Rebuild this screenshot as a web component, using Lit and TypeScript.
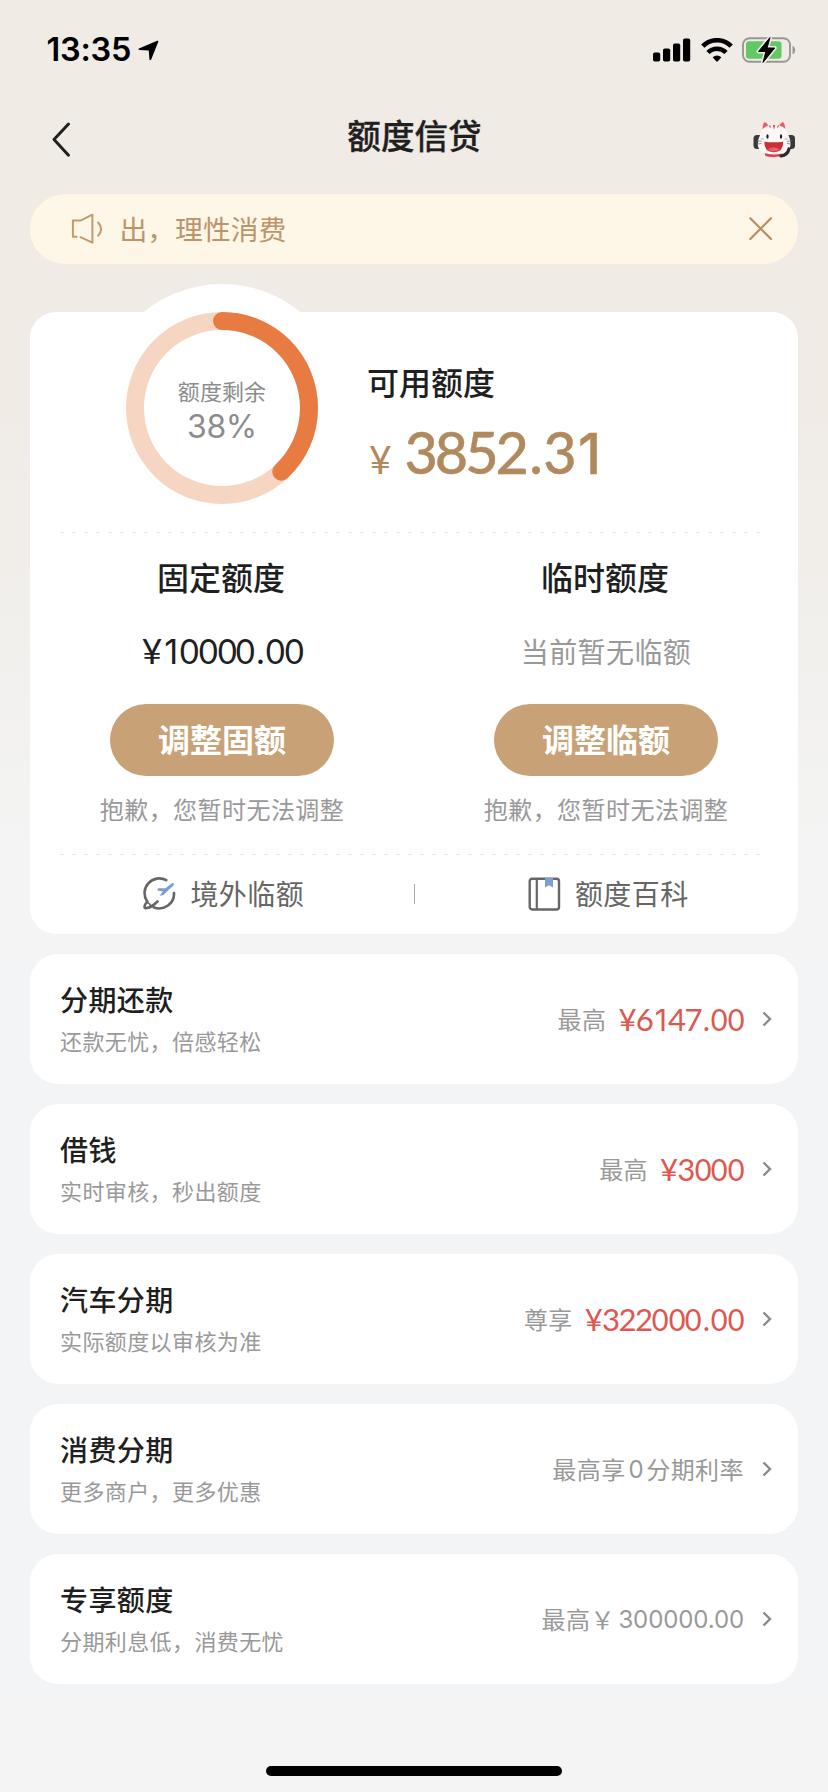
import { LitElement, html, css } from "lit";
import { customElement, property } from "lit/decorators.js";

const CJK = css`"Noto Sans CJK SC", sans-serif`;

/* Amount set in even figure boxes, with a wide decimal point. */
@customElement("money-text")
class MoneyText extends LitElement {
  @property() value = "";
  static styles = css`
    :host { display: inline-flex; align-items: baseline; font-family: Lato, sans-serif; }
    span { display: flex; justify-content: center; width: 0.528em; }
    .dot { width: 0.3em; }
    .yen { width: 0.58em; justify-content: flex-start; }
    .one { font-family: Inter, sans-serif; font-size: 0.97em; width: 0.52em; }
    .zero { transform: scaleX(0.93); }
  `;
  render() {
    const kinds: Record<string, string> = { ".": "dot", "¥": "yen", "1": "one", "0": "zero" };
    return [...this.value].map((c) => html`<span class=${kinds[c] ?? "fig"}>${c}</span>`);
  }
}

@customElement("status-bar")
class StatusBar extends LitElement {
  static styles = css`
    :host { display: block; }
    .bar { display: flex; align-items: center; justify-content: space-between; height: 100px; padding: 0 32px 0 46.5px; box-sizing: border-box; }
    .time { display: flex; align-items: center; gap: 7px; font: 600 32.5px/1 Inter, sans-serif; letter-spacing: -0.25px; color: #000; }
    .icons { display: flex; align-items: center; }
    svg { display: block; }
    .wifi { margin-left: 10px; }
    .battery { margin-left: 9px; }
  `;
  render() {
    return html`<div class="bar">
      <div class="time">
        <span>13:35</span>
        <svg width="21" height="21" viewBox="0 0 21 21"><path d="M1 8.6 19.2.8Q20.6.5 20.3 1.8L13.2 19.6Q12 21 11.4 19.3L10.8 10.6 1.6 9.9Q-.2 9.4 1 8.6Z" /></svg>
      </div>
      <div class="icons">
        <svg width="38" height="24" viewBox="0 0 38 24">
          <rect x="0" y="14.5" width="7.2" height="9" rx="1.8" /><rect x="10" y="10.5" width="7.2" height="13" rx="1.8" />
          <rect x="20" y="5.5" width="7.2" height="18" rx="1.8" /><rect x="30" y="0.5" width="7.2" height="23" rx="1.8" />
        </svg>
        <svg class="wifi" width="32" height="24" viewBox="0 0 32 24">
          <g fill="none" stroke="#000" stroke-width="4.6">
            <path d="M1.8 8.2C9.6.2 22.4.2 30.2 8.2" /><path d="M7 14.5C12 9.4 20 9.4 25 14.5" />
          </g>
          <path d="M11.6 19.3Q16 15.6 20.4 19.3L16.8 23.2Q16 24 15.2 23.2Z" />
        </svg>
        <svg class="battery" width="54" height="28" viewBox="0 0 54 28">
          <rect x="1" y="2.2" width="47" height="23.6" rx="6.5" fill="none" stroke="#999795" stroke-width="1.9" />
          <rect x="4" y="5.2" width="35.5" height="17.6" rx="3.2" fill="#62c765" />
          <path d="M50.5 9.8q2.8 1.2 2.8 4.2t-2.8 4.2z" fill="#999795" />
          <path d="M28 1.5 16.5 15.5h7.4L21 26.5 32.7 12h-7.6Z" fill="#000" stroke="#f0ebe5" stroke-width="4" stroke-linejoin="round" />
          <path d="M28 1.5 16.5 15.5h7.4L21 26.5 32.7 12h-7.6Z" fill="#000" stroke="#000" stroke-width="1" stroke-linejoin="round" />
        </svg>
      </div>
    </div>`;
  }
}

@customElement("nav-header")
class NavHeader extends LitElement {
  static styles = css`
    :host { display: block; }
    .nav { display: grid; grid-template-columns: 60px 1fr 60px; align-items: center; height: 94px; padding: 0 32px 17px 41px; box-sizing: border-box; }
    .title { text-align: center; font: 500 33.6px/48px ${CJK}; -webkit-text-stroke: 0.3px #1f1f1f; color: #1f1f1f; margin: 0; padding: 0 8px 7px 0; }
    svg { display: block; }
    .mascot { justify-self: end; }
  `;
  render() {
    return html`<header class="nav">
      <svg width="40" height="40" viewBox="0 0 40 40"><path d="M27.5 5 13 20.6 27.5 36.200" fill="none" stroke="#1f1f1f" stroke-width="3" stroke-linecap="round" stroke-linejoin="round" /></svg>
      <h1 class="title">额度信贷</h1>
      <svg class="mascot" width="44" height="40" viewBox="0 0 44 40">
        <rect x="1.500" y="16" width="9" height="14" rx="3.500" fill="#38393b" />
        <rect x="34" y="16" width="9" height="14" rx="3.500" fill="#38393b" />
        <path d="M12.500 33.500Q21.500 35 30 33.500L29 37Q21 38.800 13.500 37Z" fill="#e23b50" />
        <path d="M10 11Q10.500 2.500 13 2.800Q16 4 17 7.500ZM34 11Q33 2.500 30.500 2.800Q27.500 4 26.500 7.500Z" fill="#ea5967" stroke="#fbf3f3" stroke-width=".7" />
        <path d="M22 6C31 6 34.500 9.500 36 15Q38.500 20 38.500 25C38.500 32 32 35.500 22 35.500S5.800 32 5.800 25Q5.800 20 8.500 15C10 9.500 13 6 22 6Z" fill="#fcf8f7" />
        <path d="M20.800 5.900h2.400L22 11zM16.500 6.800l1.800-.6.7 3.200zM27.500 6.800l-1.800-.6-.7 3.200z" fill="#e8485a" />
        <path d="M37 30Q35.500 36 29 37" fill="none" stroke="#2b2b2d" stroke-width="3.200" stroke-linecap="round" />
        <ellipse cx="15.500" cy="17.500" rx="1.100" ry="2.300" fill="#1d1d1f" /><ellipse cx="29" cy="17.500" rx="1.100" ry="2.300" fill="#1d1d1f" />
        <ellipse cx="10.200" cy="20" rx="2" ry="1" fill="#f6c4c8" /><ellipse cx="34.200" cy="20" rx="2" ry="1" fill="#f6c4c8" />
        <path d="M5 21.800l4.500.6M6 25l3.500-.6M39.500 21.800l-4.500.6M38.500 25l-3.500-.6" stroke="#777" stroke-width=".8" />
        <path d="M12.300 22.800Q22 23.800 31.200 22.800Q31.500 33.200 21.800 33.200T12.300 22.800Z" fill="#c92f35" />
        <path d="M15.800 30.500Q21.800 25.800 27.800 30.500Q21.800 34.500 15.800 30.500Z" fill="#e4636a" />
      </svg>
    </header>`;
  }
}

@customElement("notice-bar")
class NoticeBar extends LitElement {
  static styles = css`
    :host { display: block; margin: 0 30px; }
    .notice { display: flex; align-items: center; height: 70px; border-radius: 35px; background: #fef7e8; padding: 0 25px 0 41px; }
    .text { flex: 1; margin-left: 15.5px; padding-bottom: 2px; font: 400 27.8px/40px ${CJK}; color: #bb9569; }
    svg { display: block; }
  `;
  render() {
    return html`<div class="notice">
      <svg width="33" height="32" viewBox="0 0 33 32">
        <g fill="none" stroke="#c39a6c" stroke-width="2" stroke-linecap="round" stroke-linejoin="round">
          <path d="M5.600 23.700H1.900V7.600H9.500L21.400 1.700V29.700L9.500 24.200" /><path d="M27.200 9.500Q33 16 27.200 22.700" />
        </g>
      </svg>
      <span class="text">出，理性消费</span>
      <svg width="24" height="24" viewBox="0 0 24 24"><path d="M1.300 1.300 22 22M22 1.300 1.300 22" stroke="#b58d61" stroke-width="2.200" stroke-linecap="round" /></svg>
    </div>`;
  }
}

@customElement("quota-ring")
class QuotaRing extends LitElement {
  @property({ type: Number }) percent = 0;
  static styles = css`
    :host { display: block; }
    .ring { display: grid; place-items: center; width: 248px; height: 248px; border-radius: 50%; background: #fff; }
    svg, .label { grid-area: 1 / 1; }
    .label { text-align: center; color: #8c8c8c; padding-top: 5px; }
    .name { font: 400 22px/32px ${CJK}; letter-spacing: 0.1px; }
    .value { margin-top: 1px; font: 400 32px/40px Inter, sans-serif; letter-spacing: -0.4px; }
  `;
  render() {
    const len = 2 * Math.PI * 87;
    return html`<div class="ring">
      <svg width="192" height="192" viewBox="0 0 192 192">
        <g fill="none" stroke-width="18">
          <circle cx="96" cy="96" r="87" stroke="#f6d6c2" />
          <circle cx="96" cy="96" r="87" stroke="#e77b42" stroke-linecap="round" transform="rotate(-90 96 96)" stroke-dasharray="${(len * this.percent) / 100} ${len}" />
        </g>
      </svg>
      <div class="label"><div class="name">额度剩余</div><div class="value">${this.percent}%</div></div>
    </div>`;
  }
}

@customElement("quota-card")
class QuotaCard extends LitElement {
  static styles = css`
    :host { display: block; margin: 48px 30px 0; }
    .card { background: #fff; border-radius: 26px; height: 622px; font-family: ${CJK}; color: #1f1f1f; }
    .top { display: flex; height: 220px; padding-left: 68px; }
    .ring { margin-top: -28px; }
    .avail { margin-left: 21px; padding-top: 46px; }
    .h { font-size: 32px; font-weight: 500; line-height: 46px; }
    .big { display: flex; align-items: baseline; margin-top: 13px; line-height: 70px; color: #b08a5d; }
    .yen { font: 400 39px/70px Lato, sans-serif; width: 37px; margin-left: 2px; }
    .num { font-size: 57.5px; font-weight: 500; -webkit-text-stroke: 0.4px #b08a5d; }
    .line { height: 1px; margin: 0 36px 0 30px; background: repeating-linear-gradient(90deg, #e6e6e6 0 4px, transparent 4px 12px); }
    .cols { display: grid; grid-template-columns: 1fr 1fr; height: 321px; }
    .col { display: flex; flex-direction: column; align-items: center; padding-top: 20px; }
    .col .h { padding-right: 2px; }
    .amount { height: 46px; margin-top: 29px; line-height: 46px; }
    .money { font-size: 35.5px; padding-left: 1px; }
    .none { font-size: 28px; letter-spacing: 0.4px; color: #999; }
    .btn { display: grid; place-items: center; width: 224px; height: 72px; margin-top: 30px; border: 0; border-radius: 36px; background: #c8a276; color: #fff; font: 700 32px/46px ${CJK}; padding: 0 0 4px; }
    .tip { font-size: 24px; line-height: 36px; margin-top: 15px; letter-spacing: 0.45px; color: #999; }
    .links { display: grid; grid-template-columns: 1fr 1px 1fr; align-items: center; height: 79px; }
    .link { display: flex; align-items: center; justify-content: center; gap: 14px; padding-left: 4px; font-size: 28px; line-height: 40px; letter-spacing: 0.4px; color: #666; }
    .link span { padding-bottom: 3px; }
    .link svg, .sep { margin-bottom: 2px; }
    .sep { height: 20px; background: #aaa; }
    svg { display: block; }
  `;
  render() {
    return html`<section class="card">
      <div class="top">
        <quota-ring class="ring" percent="38"></quota-ring>
        <div class="avail">
          <div class="h">可用额度</div>
          <div class="big"><span class="yen">¥</span><money-text class="num" value="3852.31"></money-text></div>
        </div>
      </div>
      <div class="line"></div>
      <div class="cols">
        <div class="col">
          <div class="h">固定额度</div>
          <money-text class="amount money" value="¥10000.00"></money-text>
          <button class="btn">调整固额</button>
          <div class="tip">抱歉，您暂时无法调整</div>
        </div>
        <div class="col">
          <div class="h">临时额度</div>
          <div class="amount none">当前暂无临额</div>
          <button class="btn">调整临额</button>
          <div class="tip">抱歉，您暂时无法调整</div>
        </div>
      </div>
      <div class="line"></div>
      <div class="links">
        <div class="link">
          <svg width="33" height="33" viewBox="0 0 33 33">
            <g fill="none" stroke="#666" stroke-width="2.600" stroke-linecap="round">
              <path d="M23.300 3.200A14.700 14.700 0 0 0 4.200 24.500" /><path d="M31 16A14.700 14.700 0 0 1 10.500 30.200" />
              <path d="M4.200 24.500C1 28.500.8 31.500 2.800 31.300C6 31 11 28 14.500 24.500" /><path d="M4.500 25.500Q7 26.500 8 29.500" stroke-width="1.800" />
            </g>
            <path d="M30.800 6.300Q31.300 8 29.500 9.500L26 12.500 20.500 18 16.500 18.800 20 14.600 14.200 13.600 15.200 11.200 22.500 11.300 27.500 7.300Q29.500 5.500 30.800 6.300Z" fill="#7b9dd0" />
          </svg>
          <span>境外临额</span>
        </div>
        <div class="sep"></div>
        <div class="link">
          <svg width="33" height="34" viewBox="0 0 33 34">
            <rect x="1.700" y="1.700" width="29.300" height="30.800" rx="2.500" fill="none" stroke="#666" stroke-width="2.400" />
            <path d="M8.800 2V32" stroke="#666" stroke-width="2.200" />
            <path d="M17 1h8v9.500l-4-2.200-4 2.200z" fill="#7ba0cf" />
          </svg>
          <span>额度百科</span>
        </div>
      </div>
    </section>`;
  }
}

@customElement("product-card")
class ProductCard extends LitElement {
  @property() name = "";
  @property() desc = "";
  @property() label = "";
  @property() amount = "";
  @property() tail = "";
  static styles = css`
    :host { display: block; }
    .card { display: flex; align-items: center; justify-content: space-between; height: 130px; box-sizing: border-box; padding: 0 26px 0 30px; border-radius: 28px; background: #fff; font-family: ${CJK}; }
    .info { padding-bottom: 3px; }
    .name { font-size: 28px; font-weight: 500; line-height: 40px; letter-spacing: 0.4px; color: #1f1f1f; }
    .desc { margin-top: 4px; font-size: 22px; line-height: 34px; letter-spacing: 0.4px; color: #999; }
    .right { display: flex; align-items: center; font-size: 24px; line-height: 36px; letter-spacing: 0.45px; color: #999; }
    .right > span { padding-bottom: 1px; }
    .amount { margin-left: 12px; font-size: 31.2px; letter-spacing: 0; color: #dd5850; }
    .right > .num { font-family: Inter, sans-serif; letter-spacing: -0.1px; margin-left: 4px; padding: 1px 0 0; }
    .right > .zero { font-family: Inter, sans-serif; margin: 0 2px 0 3px; padding: 1px 0 0; }
    .sign { width: 22px; letter-spacing: 0; margin-right: 2px; }
    .arrow { margin-left: 18px; }
    svg { display: block; }
  `;
  render() {
    return html`<div class="card">
      <div class="info">
        <div class="name">${this.name}</div>
        <div class="desc">${this.desc}</div>
      </div>
      <div class="right">
        <span>${this.label}</span>
        ${this.amount ? html`<money-text class="amount" value=${this.amount}></money-text>` : ""}
        ${this.tail === "0" ? html`<span class="zero">0</span><span>分期利率</span>` : this.tail ? html`<span class="sign">￥</span><span class="num">${this.tail}</span>` : ""}
        <svg class="arrow" width="10" height="18" viewBox="0 0 10 18"><path d="M1.500 2.500 8 9 1.500 15.500" fill="none" stroke="#8a8a8a" stroke-width="2.400" /></svg>
      </div>
    </div>`;
  }
}

@customElement("app-root")
class AppRoot extends LitElement {
  static styles = css`
    :host { display: block; }
    .page { width: 828px; height: 1792px; overflow: hidden; background: linear-gradient(#f0ebe5 0, #f0ebe5 400px, #f1eeea 560px, #f3f3f2 790px, #f4f4f4 860px); }
    .list { display: flex; flex-direction: column; gap: 20px; margin-top: 18px; padding: 2px 30px 19px; background: #f2f4f6; }
    .home { width: 296px; height: 10px; border-radius: 5px; background: #000; margin: 63px auto 0; }
  `;
  render() {
    return html`<div class="page">
      <status-bar></status-bar>
      <nav-header></nav-header>
      <notice-bar></notice-bar>
      <quota-card></quota-card>
      <div class="list">
        <product-card name="分期还款" desc="还款无忧，倍感轻松" label="最高" amount="¥6147.00"></product-card>
        <product-card name="借钱" desc="实时审核，秒出额度" label="最高" amount="¥3000"></product-card>
        <product-card name="汽车分期" desc="实际额度以审核为准" label="尊享" amount="¥322000.00"></product-card>
        <product-card name="消费分期" desc="更多商户，更多优惠" label="最高享" tail="0"></product-card>
        <product-card name="专享额度" desc="分期利息低，消费无忧" label="最高" tail="300000.00"></product-card>
      </div>
      <div class="home"></div>
    </div>`;
  }
}
